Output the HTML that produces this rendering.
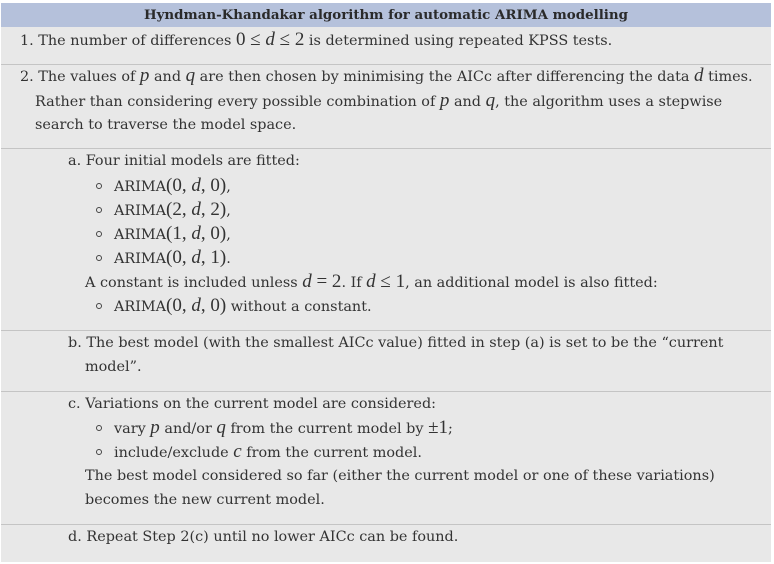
<!DOCTYPE html>
<html><head><meta charset="utf-8"><style>
html,body{margin:0;padding:0;background:#fff;}
body{width:774px;height:564px;position:relative;overflow:hidden;font-family:"DejaVu Serif","Liberation Serif",serif;font-size:14.4px;color:#333;}
.box{position:absolute;left:1px;top:3px;width:770px;height:559px;background:#e8e8e8;}
.hd{position:absolute;left:1px;top:3px;width:770px;height:24px;background:#b5c1db;text-align:center;line-height:24px;font-weight:bold;color:#2a2a2a;font-size:13.4px;}
.hr{position:absolute;left:1px;width:770px;height:1px;background:#c4c4c4;}
.l{position:absolute;white-space:nowrap;line-height:18px;}
.m{font-family:"Liberation Serif",serif;font-size:19px;}
.i{font-family:"Liberation Serif",serif;font-style:italic;font-size:19px;}
.b{position:absolute;width:4px;height:4px;border:1px solid #444;border-radius:50%;}
</style></head><body>
<div class="box"></div>
<div class="hd">Hyndman-Khandakar algorithm for automatic ARIMA modelling</div>
<div class="hr" style="top:64px"></div>
<div class="hr" style="top:148px"></div>
<div class="hr" style="top:330px"></div>
<div class="hr" style="top:391px"></div>
<div class="hr" style="top:524px"></div>

<div class="l" style="left:20px;top:31px">1. The number of differences <span class="m">0 ≤ </span><span class="i">d</span><span class="m"> ≤ 2</span> is determined using repeated KPSS tests.</div>

<div class="l" style="left:20px;top:67px">2. The values of <span class="i">p</span> and <span class="i">q</span> are then chosen by minimising the AICc after differencing the data <span class="i">d</span> times.</div>
<div class="l" style="left:35px;top:92px">Rather than considering every possible combination of <span class="i">p</span> and <span class="i">q</span>, the algorithm uses a stepwise</div>
<div class="l" style="left:35px;top:116px">search to traverse the model space.</div>

<div class="l" style="left:68px;top:152px">a. Four initial models are fitted:</div>
<div class="b" style="left:96px;top:183px"></div><div class="l" style="left:114px;top:177px">ARIMA<span class="m">(0, </span><span class="i">d</span><span class="m">, 0)</span>,</div>
<div class="b" style="left:96px;top:207px"></div><div class="l" style="left:114px;top:201px">ARIMA<span class="m">(2, </span><span class="i">d</span><span class="m">, 2)</span>,</div>
<div class="b" style="left:96px;top:231px"></div><div class="l" style="left:114px;top:225px">ARIMA<span class="m">(1, </span><span class="i">d</span><span class="m">, 0)</span>,</div>
<div class="b" style="left:96px;top:255px"></div><div class="l" style="left:114px;top:249px">ARIMA<span class="m">(0, </span><span class="i">d</span><span class="m">, 1)</span>.</div>
<div class="l" style="left:85px;top:273px">A constant is included unless <span class="i">d</span><span class="m"> = 2</span>. If <span class="i">d</span><span class="m"> ≤ 1</span>, an additional model is also fitted:</div>
<div class="b" style="left:96px;top:303px"></div><div class="l" style="left:114px;top:297px">ARIMA<span class="m">(0, </span><span class="i">d</span><span class="m">, 0)</span> without a constant.</div>

<div class="l" style="left:68px;top:334px">b. The best model (with the smallest AICc value) fitted in step (a) is set to be the “current</div>
<div class="l" style="left:85px;top:358px">model”.</div>

<div class="l" style="left:68px;top:395px">c. Variations on the current model are considered:</div>
<div class="b" style="left:96px;top:425px"></div><div class="l" style="left:114px;top:419px">vary <span class="i">p</span> and/or <span class="i">q</span> from the current model by <span class="m">±1</span>;</div>
<div class="b" style="left:96px;top:449px"></div><div class="l" style="left:114px;top:443px">include/exclude <span class="i">c</span> from the current model.</div>
<div class="l" style="left:85px;top:467px">The best model considered so far (either the current model or one of these variations)</div>
<div class="l" style="left:85px;top:491px">becomes the new current model.</div>

<div class="l" style="left:68px;top:528px">d. Repeat Step 2(c) until no lower AICc can be found.</div>
</body></html>
